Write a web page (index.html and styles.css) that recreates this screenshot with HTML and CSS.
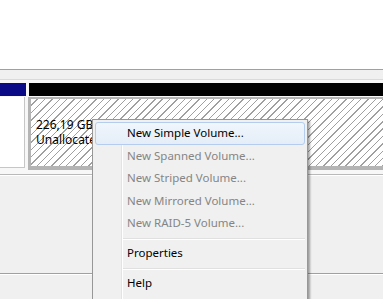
FILE: index.html
```html
<!DOCTYPE html>
<html lang="en">
<head>
    <meta charset="UTF-8">
    <title>Disk Management</title>
    <link rel="stylesheet" href="styles.css">
</head>
<body>

    <div class="top"></div>
    <div class="strip"></div>

    <!-- disk row: label column and the unallocated partition -->
    <div class="disk">
        <div class="disk-label">
            <div class="bar bar-blue"></div>
            <div class="label-box"></div>
        </div>
        <div class="disk-part">
            <div class="bar bar-black"></div>
            <div class="part-frame">
                <div class="hatch">
                    <div>226,19 GB</div>
                    <div>Unallocated</div>
                </div>
            </div>
        </div>
    </div>

    <div class="lower"></div>
    <div class="lower2"></div>

    <!-- context menu -->
    <ul class="menu">
        <li class="item active">New Simple Volume...</li>
        <li class="item disabled">New Spanned Volume...</li>
        <li class="item disabled">New Striped Volume...</li>
        <li class="item disabled">New Mirrored Volume...</li>
        <li class="item disabled">New RAID-5 Volume...</li>
        <li class="sep"></li>
        <li class="item">Properties</li>
        <li class="sep"></li>
        <li class="item">Help</li>
    </ul>

</body>
</html>
```

FILE: styles.css
```css
html {
    overflow: hidden;
}

body {
    margin: 0;
    background: #f0f0f0;
    font-family: "Noto Sans", "Open Sans", sans-serif;
    font-size: 11.5px;
    color: #000;
}

.top {
    height: 69px;
    background: #fff;
}

.strip {
    height: 9px;
    border-top: 1px solid #a0a0a0;
    border-bottom: 1px solid #dadada;
    background: #f0f0f0;
}

/* disk row */
.disk {
    display: flex;
    height: 91px;
    padding-top: 3px;
    background: #f7f7f7;
    border-bottom: 1px solid #b9b9b9;
}

.disk-label {
    width: 26px;
}

.disk-part {
    flex: 1;
    margin-left: 2px;
}

.bar {
    height: 13px;
}

.bar-blue {
    background: #0a0a86;
}

.bar-black {
    margin-left: 1px;
    background: #000;
}

.label-box {
    width: 24px;
    height: 70px;
    margin-top: 1px;
    background: #fff;
    border-right: 1px solid #c6c6c6;
    border-bottom: 1px solid #c6c6c6;
}

.part-frame {
    margin-top: 1px;
    border-top: 2px solid #b4b4b4;
    border-left: 3px solid #b4b4b4;
    border-bottom: 4px solid #b4b4b4;
}

.hatch {
    height: 67px;
    padding: 18px 0 0 5px;
    box-sizing: border-box;
    line-height: 15px;
    font-size: 12px;
    background: repeating-linear-gradient(135deg, #fff 0 4.2px, #a0a0a0 4.2px 5.2px);
}

.lower {
    height: 97px;
    border-top: 1px solid #fff;
    border-bottom: 1px solid #a0a0a0;
}

.lower2 {
    height: 40px;
    border-top: 1px solid #fff;
}

/* context menu */
.menu {
    position: absolute;
    left: 92px;
    top: 119px;
    width: 210px;
    margin: 0;
    padding: 2px 2px 20px;
    list-style: none;
    background: #f0f0f0;
    border: 1px solid #979797;
    box-shadow: 2px 2px 2px rgba(0, 0, 0, 0.35);
}

.menu::before {
    content: "";
    position: absolute;
    left: 28px;
    top: 2px;
    bottom: 2px;
    width: 1px;
    background: #e2e3e3;
    border-right: 1px solid #fff;
}

.item {
    position: relative;
    height: 22.5px;
    line-height: 22px;
    padding-left: 32px;
}

.item.disabled {
    color: #858585;
}

.item.active {
    box-sizing: border-box;
    padding-left: 31px;
    line-height: 20px;
    border: 1px solid #b4cdef;
    border-radius: 3px;
    background: linear-gradient(#f1f6fc, #e4edf8);
}

.sep {
    height: 1px;
    margin: 3px 0 2.5px 27px;
    background: #e0e0e0;
    border-bottom: 1px solid #fff;
}
```
